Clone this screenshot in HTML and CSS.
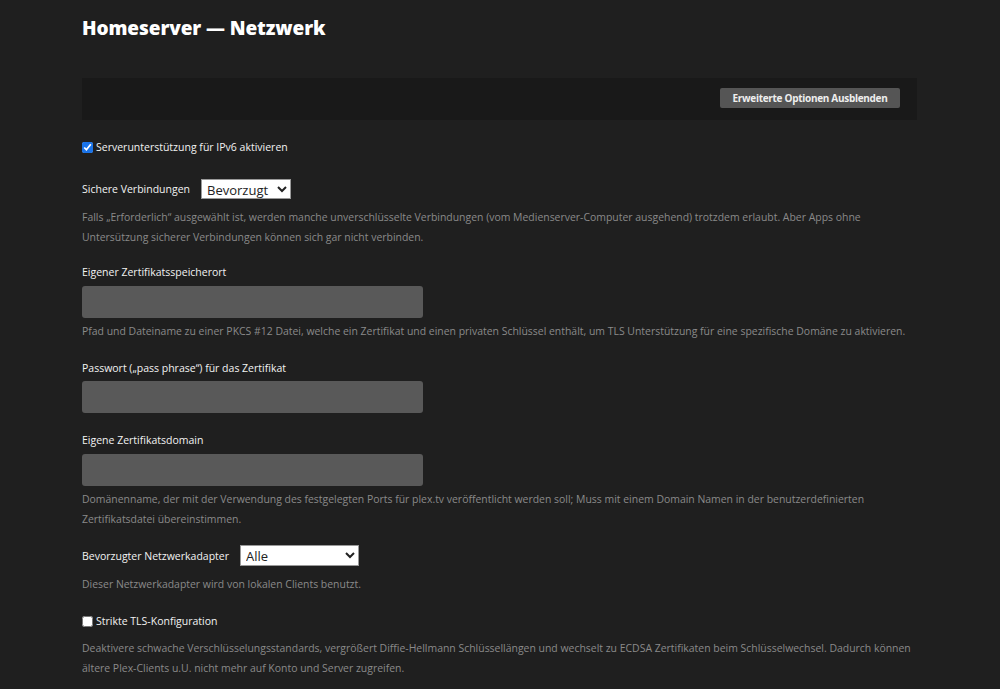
FILE: index.html
```html
<!DOCTYPE html>
<html lang="de">
<head>
<meta charset="utf-8">
<title>Homeserver — Netzwerk</title>
<link rel="stylesheet" href="styles.css">
</head>
<body>
<main class="page">
  <h1 class="title">Homeserver — Netzwerk</h1>
  <div class="toolbar">
    <button class="btn-adv" type="button">Erweiterte Optionen Ausblenden</button>
  </div>

  <div class="group g-ipv6">
    <label class="check-row"><input type="checkbox" checked> <span>Serverunterstützung für IPv6 aktivieren</span></label>
  </div>

  <div class="group g-secure">
    <div class="inline-row">
      <label class="label">Sichere Verbindungen</label>
      <select class="sel sel-secure"><option>Bevorzugt</option><option>Erforderlich</option><option>Deaktiviert</option></select>
    </div>
    <p class="help help-gap">Falls „Erforderlich“ ausgewählt ist, werden manche unverschlüsselte Verbindungen (vom Medienserver-Computer ausgehend) trotzdem erlaubt. Aber Apps ohne<br>Untersützung sicherer Verbindungen können sich gar nicht verbinden.</p>
  </div>

  <div class="group g-cert">
    <label class="label">Eigener Zertifikatsspeicherort</label>
    <input class="text-input" type="text">
    <p class="help">Pfad und Dateiname zu einer PKCS #12 Datei, welche ein Zertifikat und einen privaten Schlüssel enthält, um TLS Unterstützung für eine spezifische Domäne zu aktivieren.</p>
  </div>

  <div class="group g-pass">
    <label class="label">Passwort („pass phrase“) für das Zertifikat</label>
    <input class="text-input" type="password">
  </div>

  <div class="group g-domain">
    <label class="label">Eigene Zertifikatsdomain</label>
    <input class="text-input" type="text">
    <p class="help">Domänenname, der mit der Verwendung des festgelegten Ports für plex.tv veröffentlicht werden soll; Muss mit einem Domain Namen in der benutzerdefinierten<br>Zertifikatsdatei übereinstimmen.</p>
  </div>

  <div class="group g-adapter">
    <div class="inline-row">
      <label class="label">Bevorzugter Netzwerkadapter</label>
      <select class="sel sel-adapter"><option>Alle</option></select>
    </div>
    <p class="help help-gap">Dieser Netzwerkadapter wird von lokalen Clients benutzt.</p>
  </div>

  <div class="group g-tls">
    <label class="check-row"><input type="checkbox"> <span>Strikte TLS-Konfiguration</span></label>
    <p class="help help-gap2">Deaktivere schwache Verschlüsselungsstandards, vergrößert Diffie-Hellmann Schlüssellängen und wechselt zu ECDSA Zertifikaten beim Schlüsselwechsel. Dadurch können<br>ältere Plex-Clients u.U. nicht mehr auf Konto und Server zugreifen.</p>
  </div>
</main>
</body>
</html>
```

FILE: styles.css
```css
html, body {
  margin: 0;
  padding: 0;
  background: #1f1f1f;
}
body {
  font-family: "Open Sans", "Noto Sans", sans-serif;
  color: #eeeeee;
  font-size: 11px;
}
.page {
  width: 835px;
  padding: 16px 0 0 82px;
}
.title {
  margin: 0;
  font-family: "Open Sans", sans-serif;
  font-weight: 800;
  font-size: 19px;
  line-height: 24px;
  color: #ffffff;
  letter-spacing: -0.1px;
}
.toolbar {
  margin-top: 38px;
  height: 42px;
  background: #191919;
  display: flex;
  align-items: center;
  justify-content: flex-end;
  padding-right: 17px;
}
.btn-adv {
  height: 20px;
  width: 180px;
  border: none;
  border-radius: 2px;
  background: #555555;
  color: #eeeeee;
  font-family: "Open Sans", sans-serif;
  font-weight: 700;
  font-size: 10px;
  letter-spacing: -0.3px;
  padding: 0;
  margin-top: -2px;
}
.group { margin-top: 16px; }
.g-ipv6 { margin-top: 17px; }
.g-secure { margin-top: 22px; }
.g-cert { margin-top: 15px; }
.g-pass, .g-domain, .g-tls { margin-top: 17px; }
.g-adapter { margin-top: 16px; }

.check-row {
  display: flex;
  align-items: center;
  height: 20px;
  font-size: 10.5px;
  font-weight: 500;
  color: #f2f2f2;
}
.check-row input {
  margin: 0 3px 0 0;
  width: 11px;
  height: 11px;
  accent-color: #1a73e8;
}
.inline-row {
  display: flex;
  align-items: center;
  gap: 11px;
}
.label {
  display: block;
  font-size: 10.5px;
  font-weight: 500;
  line-height: 20px;
  color: #f2f2f2;
}
.sel {
  font-family: "Open Sans", sans-serif;
  font-size: 13px;
  background: #ffffff;
  color: #222;
  border: 1px solid #999;
  border-radius: 0;
  padding: 0 1px;
  line-height: 18px;
}
.sel-secure { width: 90px; height: 20px; }
.sel-adapter { width: 119px; height: 21px; }
.text-input {
  display: block;
  margin-top: 4px;
  width: 341px;
  height: 32px;
  box-sizing: border-box;
  background: #595959;
  border: none;
  border-radius: 3px;
}
.g-pass .text-input { margin-top: 3px; }
.help {
  margin: 3px 0 0 0;
  font-size: 10.45px;
  line-height: 20px;
  color: #8a8a8a;
}
.help-gap { margin-top: 8px; }
.help-gap2 { margin-top: 7px; }
```
